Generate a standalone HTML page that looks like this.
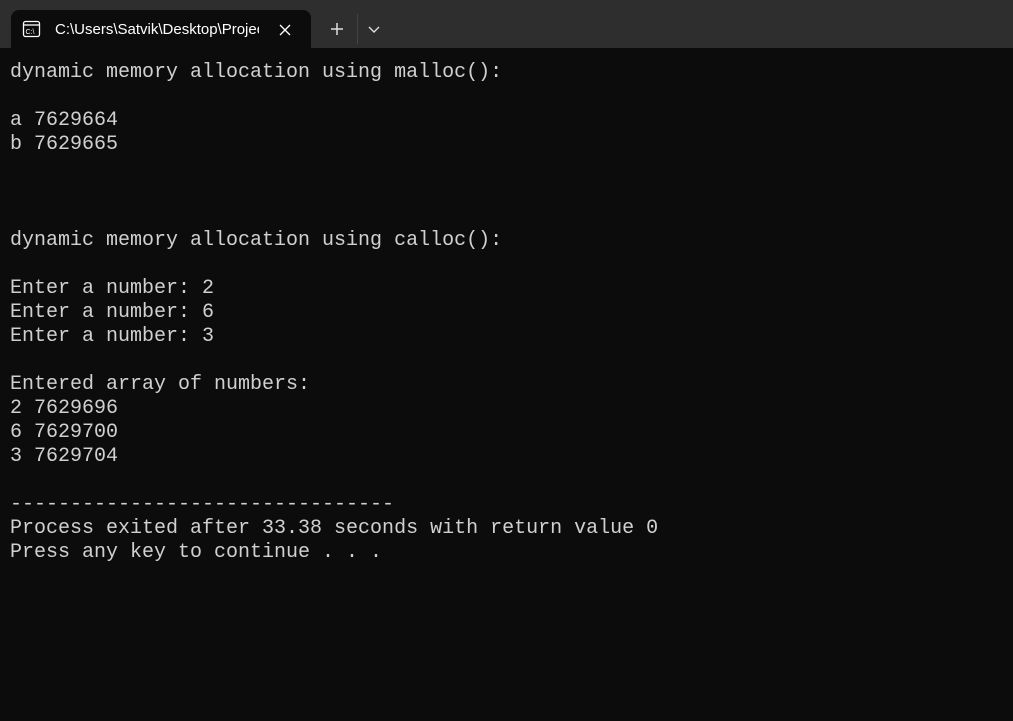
<!DOCTYPE html>
<html><head><style>
html,body{margin:0;padding:0;width:1013px;height:721px;background:#0c0c0c;overflow:hidden}
.bar{position:absolute;left:0;top:0;width:1013px;height:48px;background:#2e2e2e}
.tab{position:absolute;left:11px;top:10px;width:300px;height:39px;background:#0c0c0c;border-radius:8px 8px 0 0}
.title{position:absolute;left:55px;top:21px;font:15px "Liberation Sans",sans-serif;color:#fff;width:204px;overflow:hidden;white-space:nowrap}
pre{position:absolute;left:10px;top:61px;margin:0;font:20px/24px "Liberation Mono",monospace;color:#d0d0d0}
</style></head><body>
<div class="bar"></div>
<div class="tab"></div>
<svg style="position:absolute;left:22px;top:20px" width="20" height="20" viewBox="0 0 20 20"><rect x="1.5" y="1.5" width="16" height="15" rx="2" fill="none" stroke="#fff" stroke-width="1.3"/><line x1="1.5" y1="5" x2="17.5" y2="5" stroke="#fff" stroke-width="1.3"/><text x="3.5" y="14" font-family="Liberation Sans" font-size="7" fill="#fff">C:\</text></svg>
<div class="title">C:\Users\Satvik\Desktop\Projects</div>
<svg style="position:absolute;left:278px;top:23px" width="14" height="14"><path d="M2 2L12 12M12 2L2 12" stroke="#fff" stroke-width="1.3"/></svg>
<svg style="position:absolute;left:330px;top:22px" width="14" height="14"><path d="M7 1V13M1 7H13" stroke="#ddd" stroke-width="1.5"/></svg>
<div style="position:absolute;left:357px;top:14px;width:1px;height:30px;background:#444"></div>
<svg style="position:absolute;left:368px;top:24px" width="12" height="10"><path d="M1 3L6 8L11 3" stroke="#ddd" stroke-width="1.4" fill="none"/></svg>
<pre>dynamic memory allocation using malloc():

a 7629664
b 7629665



dynamic memory allocation using calloc():

Enter a number: 2
Enter a number: 6
Enter a number: 3

Entered array of numbers:
2 7629696
6 7629700
3 7629704

--------------------------------
Process exited after 33.38 seconds with return value 0
Press any key to continue . . .</pre>
</body></html>
